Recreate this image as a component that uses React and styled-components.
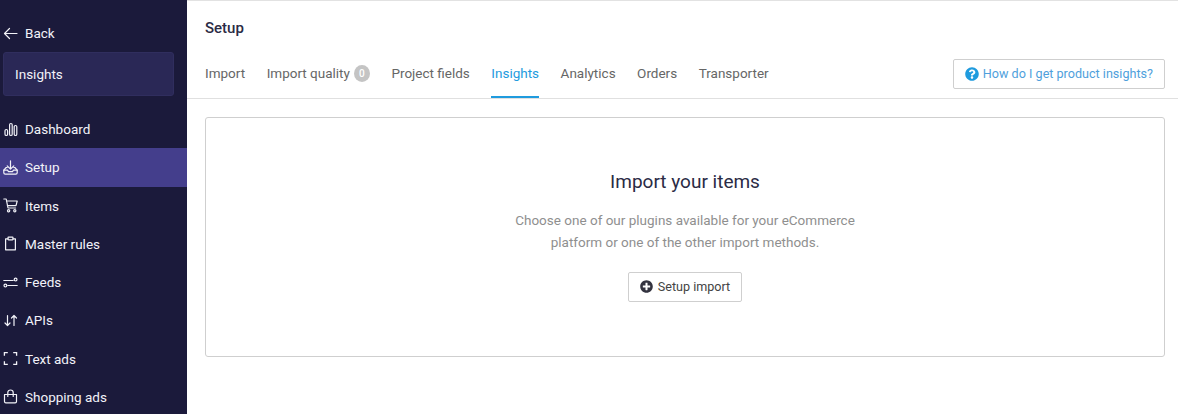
import React from 'react';
import styled, { createGlobalStyle } from 'styled-components';
import { FaPlusCircle, FaQuestionCircle } from 'react-icons/fa';

const GlobalStyle = createGlobalStyle`
  html, body {
    margin: 0;
    padding: 0;
    height: 414px;
    overflow: hidden;
    background: #fff;
    font-family: Roboto, "Liberation Sans", sans-serif;
  }
  * { box-sizing: border-box; }
`;

const Page = styled.div`
  display: flex;
  width: 1178px;
  height: 414px;
  overflow: hidden;
`;

const Sidebar = styled.aside`
  width: 187px;
  flex: none;
  background: #1b1a3b;
  color: #f2f2f8;
  padding-top: 15px;
`;

const BackLink = styled.div`
  display: flex;
  align-items: center;
  height: 37px;
  padding: 0 0 1px 3px;
  gap: 7px;
  font-size: 13.5px;
`;

const SectionBox = styled.div`
  margin: 0 13px 0 3px;
  height: 44px;
  display: flex;
  align-items: center;
  padding: 0 0 1px 11px;
  background: #2a2856;
  border: 1px solid #302e5e;
  border-radius: 3px;
  font-size: 13.5px;
`;

const Nav = styled.nav`
  margin-top: 14px;
`;

const NavItem = styled.div`
  display: flex;
  align-items: center;
  height: 38.25px;
  padding-left: 3px;
  gap: 7px;
  font-size: 13.5px;
  background: ${p => (p.$active ? '#443e8c' : 'transparent')};
`;

const IconSlot = styled.span`
  width: 15px;
  height: 15px;
  display: flex;
  align-items: center;
  justify-content: center;
  flex: none;
  svg { width: 15px; height: 15px; }
`;

const Main = styled.main`
  flex: 1;
  min-width: 0;
  border-top: 1px solid #e2e2e2;
`;

const Header = styled.header`
  height: 98px;
  border-bottom: 1px solid #e0e0e0;
  padding: 0 13px 0 18px;
  display: flex;
  flex-direction: column;
`;

const PageTitle = styled.h1`
  margin: 18px 0 0;
  font-size: 15px;
  line-height: 18px;
  font-weight: 500;
  color: #2b2b45;
`;

const TabRow = styled.div`
  display: flex;
  align-items: stretch;
  justify-content: space-between;
  margin-top: 22px;
  flex: 1;
`;

const Tabs = styled.div`
  display: flex;
  gap: 21.5px;
`;

const Tab = styled.div`
  display: flex;
  align-items: flex-start;
  padding-top: 5px;
  height: 39px;
  font-size: 13.5px;
  line-height: 18px;
  color: ${p => (p.$active ? '#1f9bde' : '#666')};
  border-bottom: 2px solid ${p => (p.$active ? '#1f9bde' : 'transparent')};
`;

const Count = styled.span`
  display: inline-flex;
  align-items: center;
  justify-content: center;
  width: 16px;
  height: 17px;
  margin: 1px 0 0 4px;
  border-radius: 50%;
  background: #c4c4c4;
  color: #fff;
  font-size: 10px;
  font-weight: 500;
`;

const HelpButton = styled.button`
  align-self: flex-start;
  display: flex;
  align-items: center;
  gap: 4px;
  height: 30px;
  padding: 0 11px 1px;
  background: #fff;
  border: 1px solid #cfcfcf;
  border-radius: 2px;
  color: #4f9fdc;
  font: 400 12.6px Roboto, sans-serif;
  svg { color: #1f9bde; font-size: 14px; }
`;

const Content = styled.div`
  padding: 18px 13px 0 18px;
`;

const EmptyCard = styled.section`
  height: 240px;
  border: 1px solid #cfcfcf;
  border-radius: 3px;
  display: flex;
  flex-direction: column;
  align-items: center;
  padding-top: 52px;
`;

const EmptyTitle = styled.h2`
  margin: 0;
  font-size: 19px;
  line-height: 24px;
  font-weight: 400;
  color: #2b2b45;
`;

const EmptyText = styled.p`
  margin: 14.5px 0 0;
  font-size: 13.5px;
  line-height: 22px;
  color: #8f8f8f;
  text-align: center;
`;

const SetupButton = styled.button`
  display: flex;
  align-items: center;
  gap: 5px;
  height: 30px;
  margin-top: 19.5px;
  padding: 0 11px 1px;
  background: #fff;
  border: 1px solid #cfcfcf;
  border-radius: 2px;
  color: #444;
  font: 400 12.6px Roboto, sans-serif;
  svg { color: #33333f; font-size: 13px; }
`;

const Glyph = ({ children, width = 1.2 }) => (
  <svg viewBox="0 0 15 15" fill="none" stroke="currentColor" strokeWidth={width} strokeLinecap="round" strokeLinejoin="round">
    {children}
  </svg>
);

const BackIcon = () => (
  <Glyph>
    <path d="M1.5 7.5h12.5M6.5 2.5l-5 5 5 5" />
  </Glyph>
);

const BarsIcon = () => (
  <Glyph>
    <rect x="2" y="7.5" width="2.6" height="6" rx="1.3" />
    <rect x="6.6" y="1.5" width="2.6" height="12" rx="1.3" />
    <rect x="11.2" y="3.5" width="2.6" height="10" rx="1.3" />
  </Glyph>
);

const SetupIcon = () => (
  <Glyph>
    <path d="M7.5 .8v8.2M4.2 5.8l3.3 3.3 3.3-3.3" />
    <path d="M4.2 7.5H3.2L.8 10.2v2.6c0 .8.6 1.4 1.4 1.4h10.6c.8 0 1.4-.6 1.4-1.4v-2.6l-2.4-2.7h-1" />
    <path d="M.8 10.2h3.7l1 1.4h4l1-1.4h3.7" />
  </Glyph>
);

const CartIcon = () => (
  <Glyph>
    <path d="M.8 1h2.4l1.8 9h7.600" />
    <path d="M3.5 3h10.7l-1.200 4.600H4.400" />
    <circle cx="5.6" cy="12.8" r="1.1" />
    <circle cx="11.8" cy="12.8" r="1.1" />
  </Glyph>
);

const ClipboardIcon = () => (
  <Glyph>
    <path d="M5 2.8H2.600v11h9.800v-11H10" />
    <rect x="5" y="1.2" width="5" height="2.6" rx=".5" />
  </Glyph>
);

const FeedsIcon = () => (
  <Glyph>
    <path d="M.8 5.5h9.4" />
    <circle cx="12.6" cy="4.6" r="1.4" />
    <path d="M4.8 10.5h9.4" />
    <circle cx="2.4" cy="10.6" r="1.4" />
  </Glyph>
);

const SortIcon = () => (
  <Glyph>
    <path d="M4.5 2.5v10M2 10l2.5 2.5L7 10" />
    <path d="M11 12.5v-10M8.5 5L11 2.5 13.5 5" />
  </Glyph>
);

const CornersIcon = () => (
  <Glyph width={1.3}>
    <path d="M4.8 1.6H1.400v3.200M10.200 1.600h3.400v3.200M4.800 13.400H1.400v-3.200M10.200 13.400h3.400v-3.200" strokeLinecap="butt" strokeLinejoin="miter" />
  </Glyph>
);

const BagIcon = () => (
  <Glyph>
    <path d="M1.5 5.5h12v7c0 .8-.6 1.4-1.400 1.400H2.900c-.8 0-1.400-.6-1.400-1.400z" />
    <path d="M4.8 7.5V3.600C4.800 2 6 1 7.500 1s2.700 1 2.700 2.600v3.900" />
  </Glyph>
);

const navItems = [
  { label: 'Dashboard', icon: <BarsIcon /> },
  { label: 'Setup', icon: <SetupIcon />, active: true },
  { label: 'Items', icon: <CartIcon /> },
  { label: 'Master rules', icon: <ClipboardIcon /> },
  { label: 'Feeds', icon: <FeedsIcon /> },
  { label: 'APIs', icon: <SortIcon /> },
  { label: 'Text ads', icon: <CornersIcon /> },
  { label: 'Shopping ads', icon: <BagIcon /> },
];

const tabs = ['Import', 'Import quality', 'Project fields', 'Insights', 'Analytics', 'Orders', 'Transporter'];

export default function App() {
  return (
    <Page>
      <GlobalStyle />
      <Sidebar>
        <BackLink><IconSlot><BackIcon /></IconSlot>Back</BackLink>
        <SectionBox>Insights</SectionBox>
        <Nav>
          {navItems.map(item => (
            <NavItem key={item.label} $active={item.active}>
              <IconSlot>{item.icon}</IconSlot>
              {item.label}
            </NavItem>
          ))}
        </Nav>
      </Sidebar>
      <Main>
        <Header>
          <PageTitle>Setup</PageTitle>
          <TabRow>
            <Tabs>
              {tabs.map(tab => (
                <Tab key={tab} $active={tab === 'Insights'}>
                  {tab}
                  {tab === 'Import quality' && <Count>0</Count>}
                </Tab>
              ))}
            </Tabs>
            <HelpButton><FaQuestionCircle />How do I get product insights?</HelpButton>
          </TabRow>
        </Header>
        <Content>
          <EmptyCard>
            <EmptyTitle>Import your items</EmptyTitle>
            <EmptyText>
              Choose one of our plugins available for your eCommerce<br />
              platform or one of the other import methods.
            </EmptyText>
            <SetupButton><FaPlusCircle />Setup import</SetupButton>
          </EmptyCard>
        </Content>
      </Main>
    </Page>
  );
}
